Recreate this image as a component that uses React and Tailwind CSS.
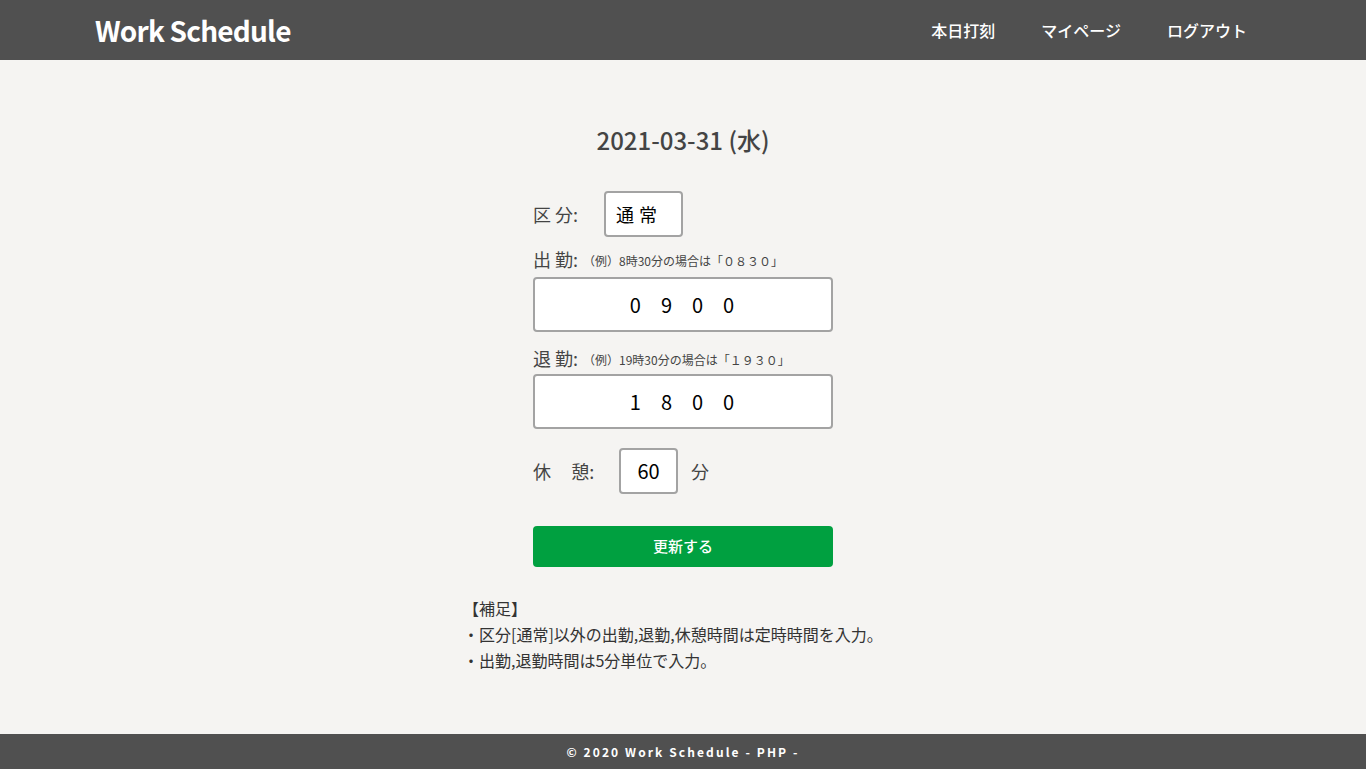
export default function App() {
  const font = { fontFamily: '"Noto Sans CJK JP", "Noto Sans", sans-serif' };
  return (
    <div className="h-[769px] flex flex-col bg-[#f5f4f2] text-[#444]" style={font}>
      <header className="h-[60px] shrink-0 bg-[#505050] flex items-center justify-between pl-[95px] pr-[119px]">
        <div className="text-white text-[28px] font-bold tracking-[-0.8px] leading-none">Work Schedule</div>
        <nav className="flex items-center gap-[46px] text-white text-[16px] font-medium">
          <span>本日打刻</span>
          <span>マイページ</span>
          <span>ログアウト</span>
        </nav>
      </header>
      <main className="flex-1 flex flex-col items-center">
        <h1 className="mt-[63px] text-[24px] font-medium text-[#444] leading-[34px]">2021-03-31 (水)</h1>
        <div className="w-[300px] mt-[34px] flex flex-col">
          <div className="flex items-center h-[46px]">
            <span className="text-[18px] w-[71px] text-[#444]"><span className="mr-[4px]">区</span>分:</span>
            <div className="w-[79px] h-[46px] border-2 border-[#a3a3a3] rounded-[4px] bg-white flex items-center pl-[10px] text-[18px] text-black tracking-[5px]">通常</div>
          </div>
          <div className="mt-[13px] flex items-end leading-none">
            <span className="text-[18px] text-[#444]"><span className="mr-[4px]">出</span>勤:</span>
            <span className="text-[12px] ml-[5px] mb-[1px] text-[#444]">（例）8時30分の場合は「０８３０」</span>
          </div>
          <div className="mt-[9px] h-[55px] border-2 border-[#a3a3a3] rounded-[4px] bg-white flex items-center justify-center text-[20px] text-black tracking-[20px] pl-[18px]">0900</div>
          <div className="mt-[17px] flex items-end leading-none">
            <span className="text-[18px] text-[#444]"><span className="mr-[4px]">退</span>勤:</span>
            <span className="text-[12px] ml-[5px] mb-[1px] text-[#444]">（例）19時30分の場合は「１９３０」</span>
          </div>
          <div className="mt-[7px] h-[55px] border-2 border-[#a3a3a3] rounded-[4px] bg-white flex items-center justify-center text-[20px] text-black tracking-[20px] pl-[18px]">1800</div>
          <div className="mt-[19px] flex items-center h-[46px]">
            <span className="text-[18px] w-[86px] text-[#444]">休&nbsp;&nbsp;&nbsp;&nbsp;&nbsp;憩:</span>
            <div className="w-[59px] h-[46px] border-2 border-[#a3a3a3] rounded-[4px] bg-white flex items-center justify-center text-[20px] text-black">60</div>
            <span className="text-[18px] ml-[13px] text-[#444]">分</span>
          </div>
          <button className="mt-[32px] h-[41px] w-full bg-[#00a040] rounded-[4px] text-white text-[15px] font-medium">更新する</button>
        </div>
        <div className="mt-[28px] w-[434px] text-[16px] leading-[26px] text-[#333] -ml-[6px]">
          <div>【補足】</div>
          <div>・区分[通常]以外の出勤,退勤,休憩時間は定時時間を入力。</div>
          <div>・出勤,退勤時間は5分単位で入力。</div>
        </div>
      </main>
      <footer className="h-[35px] shrink-0 bg-[#505050] flex items-center justify-center text-white text-[12px] font-bold tracking-[2.1px]">
        © 2020 Work Schedule - PHP -
      </footer>
    </div>
  );
}
